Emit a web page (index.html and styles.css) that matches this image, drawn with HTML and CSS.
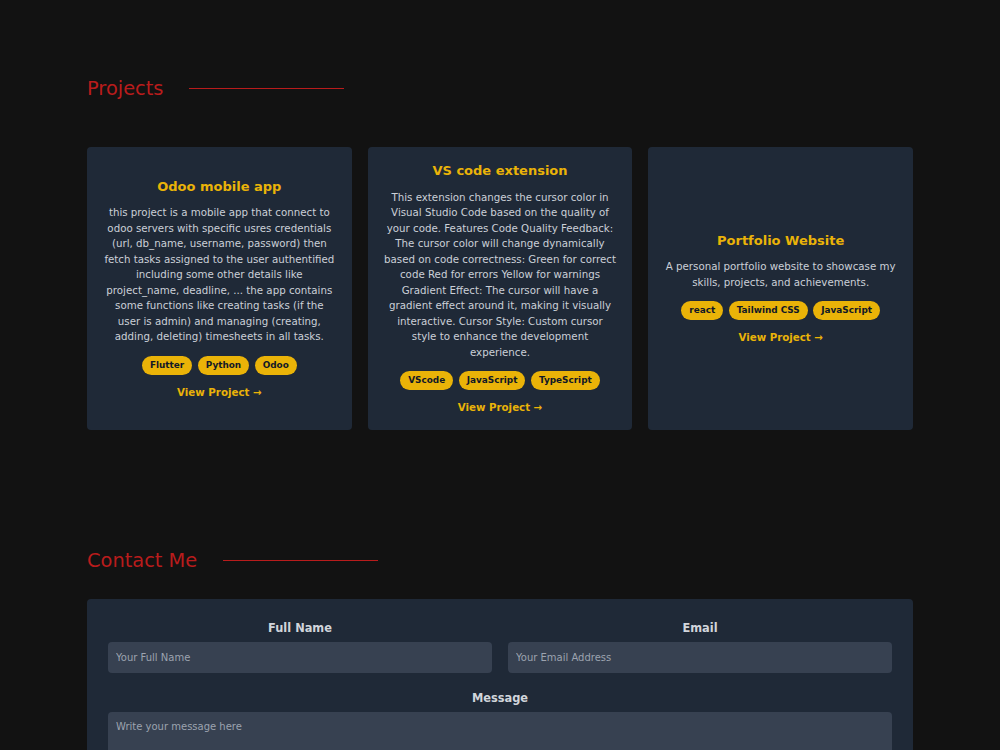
FILE: index.html
```html
<!DOCTYPE html>
<html lang="en">
<head>
<meta charset="utf-8">
<title>Portfolio</title>
<link rel="stylesheet" href="styles.css">
</head>
<body>
<main class="container">
  <section class="projects">
    <div class="section-head">
      <h2>Projects</h2>
      <span class="rule"></span>
    </div>
    <div class="grid">
      <article class="card">
        <h3>Odoo mobile app</h3>
        <p>this project is a mobile app that connect to odoo servers with specific usres credentials (url, db_name, username, password) then fetch tasks assigned to the user authentified including some other details like project_name, deadline, ... the app contains some functions like creating tasks (if the user is admin) and managing (creating, adding, deleting) timesheets in all tasks.</p>
        <div class="tags"><span class="tag">Flutter</span><span class="tag">Python</span><span class="tag">Odoo</span></div>
        <a class="link" href="#">View Project →</a>
      </article>
      <article class="card">
        <h3>VS code extension</h3>
        <p>This extension changes the cursor color in Visual Studio Code based on the quality of your code. Features Code Quality Feedback: The cursor color will change dynamically based on code correctness: Green for correct code Red for errors Yellow for warnings Gradient Effect: The cursor will have a gradient effect around it, making it visually interactive. Cursor Style: Custom cursor style to enhance the development experience.</p>
        <div class="tags"><span class="tag">VScode</span><span class="tag">JavaScript</span><span class="tag">TypeScript</span></div>
        <a class="link" href="#">View Project →</a>
      </article>
      <article class="card">
        <h3>Portfolio Website</h3>
        <p>A personal portfolio website to showcase my skills, projects, and achievements.</p>
        <div class="tags"><span class="tag">react</span><span class="tag">Tailwind CSS</span><span class="tag">JavaScript</span></div>
        <a class="link" href="#">View Project →</a>
      </article>
    </div>
  </section>

  <section class="contact">
    <div class="section-head">
      <h2>Contact Me</h2>
      <span class="rule"></span>
    </div>
    <form class="form-card">
      <div class="row">
        <label class="field">
          <span class="label">Full Name</span>
          <input type="text" placeholder="Your Full Name">
        </label>
        <label class="field">
          <span class="label">Email</span>
          <input type="email" placeholder="Your Email Address">
        </label>
      </div>
      <label class="field msg">
        <span class="label">Message</span>
        <textarea placeholder="Write your message here"></textarea>
      </label>
    </form>
  </section>
</main>
</body>
</html>
```
FILE: styles.css
```css
* { box-sizing: border-box; }
html, body { margin: 0; padding: 0; }
body {
  background: #121212;
  font-family: "DejaVu Sans", sans-serif;
  color: #d1d5db;
}
.container {
  width: 826px;
  margin: 0 auto;
}
.projects { padding-top: 77px; }
.section-head {
  display: flex;
  align-items: center;
  gap: 26px;
  height: 23px;
}
.section-head h2 {
  margin: 0;
  font-size: 19.4px;
  font-weight: normal;
  line-height: 23px;
  color: #b91c1c;
}
.rule {
  width: 155px;
  height: 1px;
  background: #b91c1c;
}
.grid {
  margin-top: 47px;
  display: grid;
  grid-template-columns: repeat(3, 1fr);
  gap: 16px;
}
.card {
  background: #1f2937;
  border-radius: 4px;
  padding: 14px 16px 14.5px;
  height: 283px;
  display: flex;
  flex-direction: column;
  justify-content: center;
  align-items: center;
  text-align: center;
}
.card h3 {
  margin: 0;
  font-size: 13px;
  line-height: 19.5px;
  font-weight: bold;
  color: #eab308;
}
.card p {
  margin: 9px 0 0;
  font-size: 10.25px;
  line-height: 15.5px;
  color: #cbd0d8;
}
.tags {
  display: flex;
  justify-content: center;
  gap: 5.5px;
  margin-top: 11px;
}
.tag {
  background: #eab308;
  color: #111827;
  font-size: 8.9px;
  font-weight: bold;
  line-height: 13px;
  padding: 3px 8px;
  border-radius: 9999px;
}
.link {
  margin-top: 10px;
  font-size: 10.25px;
  line-height: 15.5px;
  font-weight: bold;
  color: #eab308;
  text-decoration: none;
}
.contact { margin-top: 119px; }
.form-card {
  margin-top: 27px;
  background: #1f2937;
  border-radius: 4px;
  padding: 21px 21px 40px;
}
.row {
  display: grid;
  grid-template-columns: 1fr 1fr;
  gap: 16px;
}
.field {
  display: flex;
  flex-direction: column;
}
.label {
  text-align: center;
  font-size: 11.4px;
  line-height: 17px;
  font-weight: bold;
  color: #d1d5db;
  margin-bottom: 5px;
}
input, textarea {
  background: #374151;
  border: none;
  border-radius: 4px;
  color: #d1d5db;
  font-family: "DejaVu Sans", sans-serif;
  font-size: 10px;
  padding: 0 8px;
  outline: none;
}
input { height: 31px; }
textarea {
  height: 110px;
  padding-top: 9px;
  resize: none;
}
input::placeholder, textarea::placeholder { color: #9ca3af; }
.msg { margin-top: 17px; }
```
